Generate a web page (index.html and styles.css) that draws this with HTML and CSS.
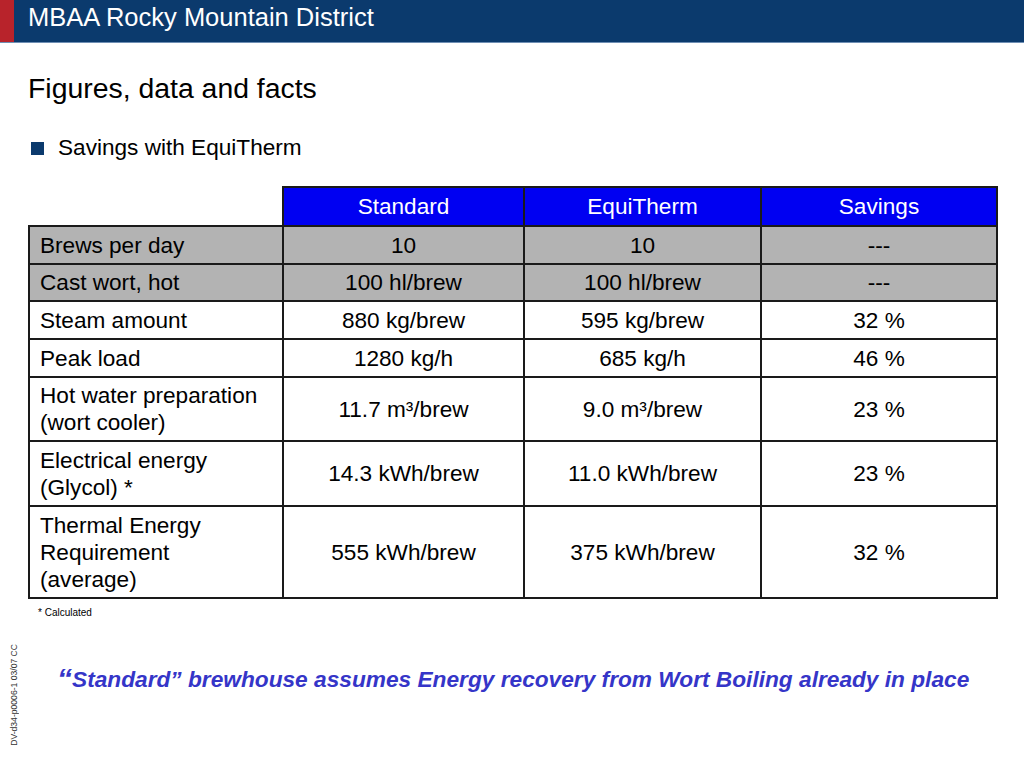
FILE: index.html
```html
<!DOCTYPE html>
<html>
<head>
<meta charset="utf-8">
<link rel="stylesheet" href="styles.css">
</head>
<body>
<header class="topbar">
  <div class="accent"></div>
  <div class="brand">MBAA Rocky Mountain District</div>
</header>
<main class="content">
  <h1 class="title">Figures, data and facts</h1>
  <div class="bullet"><span class="square"></span><span>Savings with EquiTherm</span></div>
  <table class="data">
    <colgroup>
      <col class="c1"><col class="c2"><col class="c3"><col class="c4">
    </colgroup>
    <thead>
      <tr class="r-head">
        <th class="blank"></th><th>Standard</th><th>EquiTherm</th><th>Savings</th>
      </tr>
    </thead>
    <tbody>
      <tr class="gray r1"><td>Brews per day</td><td>10</td><td>10</td><td>---</td></tr>
      <tr class="gray r2"><td>Cast wort, hot</td><td>100 hl/brew</td><td>100 hl/brew</td><td>---</td></tr>
      <tr class="r3"><td>Steam amount</td><td>880 kg/brew</td><td>595 kg/brew</td><td>32 %</td></tr>
      <tr class="r4"><td>Peak load</td><td>1280 kg/h</td><td>685 kg/h</td><td>46 %</td></tr>
      <tr class="r5"><td>Hot water preparation<br>(wort cooler)</td><td>11.7 m³/brew</td><td>9.0 m³/brew</td><td>23 %</td></tr>
      <tr class="r6"><td>Electrical energy<br>(Glycol) *</td><td>14.3 kWh/brew</td><td>11.0 kWh/brew</td><td>23 %</td></tr>
      <tr class="r7"><td>Thermal Energy<br>Requirement<br>(average)</td><td>555 kWh/brew</td><td>375 kWh/brew</td><td>32 %</td></tr>
    </tbody>
  </table>
  <p class="note">* Calculated</p>
  <div class="bottom">
    <div class="code">DV-d34-p0006-1 03/07 CC</div>
    <p class="quote"><span class="q">“</span>Standard” brewhouse assumes Energy recovery from Wort Boiling already in place</p>
  </div>
</main>
</body>
</html>
```
FILE: styles.css
```css
* { box-sizing: border-box; }
html, body { margin: 0; padding: 0; }
body {
  width: 1024px;
  height: 768px;
  background: #fff;
  font-family: "Liberation Sans", Arial, sans-serif;
  color: #000;
  overflow: hidden;
}
.topbar {
  display: flex;
  height: 43px;
  background: #0b3a6d;
  border-bottom: 1px solid #6f8fb4;
}
.accent { width: 14px; background: #b8232b; }
.brand {
  color: #fff;
  font-size: 25.5px;
  line-height: 34px;
  padding-left: 14px;
}
.content { padding-left: 28px; }
.title {
  margin: 0;
  padding-top: 29px;
  font-weight: normal;
  font-size: 28.4px;
  line-height: 32px;
}
.bullet {
  display: flex;
  align-items: center;
  gap: 14px;
  margin-top: 31px;
  padding-left: 3px;
  font-size: 22.6px;
  line-height: 26px;
}
.square { width: 13px; height: 13px; background: #0b3a6d; }
.data {
  margin-top: 25px;
  border-collapse: collapse;
  width: 968px;
  font-size: 22.6px;
  table-layout: fixed;
}
.c1 { width: 254px; }
.c2 { width: 241px; }
.c3 { width: 237px; }
.c4 { width: 236px; }
.data th, .data td {
  border: 2px solid #1a1a1a;
  padding: 0 0 0 10px;
  line-height: 27px;
  vertical-align: middle;
}
.data td + td, .data th { text-align: center; padding: 0; }
.data th {
  background: #0000f2;
  color: #fff;
  font-weight: normal;
}
.data th.blank { background: #fff; border-top: none; border-left: none; }
.r-head { height: 39px; }
.gray td { background: #b3b3b3; }
.r1 { height: 38px; }
.r2 { height: 37px; }
.r3 { height: 38px; }
.r4 { height: 38px; }
.r5 { height: 64px; }
.r6 { height: 65px; }
.r7 { height: 92px; }
.note {
  margin: 8px 0 0 10px;
  font-size: 10px;
  line-height: 12px;
}
.bottom {
  display: flex;
  align-items: flex-start;
  margin-left: -28px;
  margin-top: 25px;
}
.code {
  writing-mode: vertical-rl;
  transform: rotate(180deg);
  white-space: nowrap;
  font-size: 8.6px;
  color: #333;
  margin-left: 8px;
  width: 12px;
  line-height: 12px;
}
.quote {
  margin: 22px 0 0 37px;
  color: #3535c8;
  font-weight: bold;
  font-style: italic;
  font-size: 22.7px;
  line-height: 26px;
  white-space: nowrap;
}
.q { font-size: 30px; vertical-align: -2px; }
```
